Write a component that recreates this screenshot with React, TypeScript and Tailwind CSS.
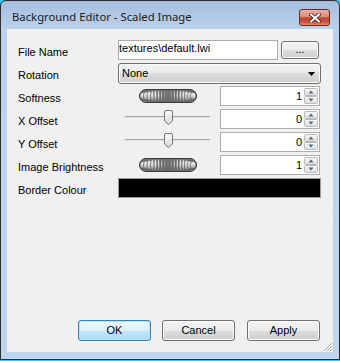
import React from "react"

function CloseButton() {
  return (
    <div className="ml-auto mr-[3px] mt-[8px] flex h-[17px] w-[31px] items-center justify-center rounded-[3px] border border-[#6e2a20] bg-[linear-gradient(to_bottom,#eab0a3_0%,#d98d7d_45%,#c3422e_52%,#c84f3b_78%,#e4896b_100%)]">
      <svg width="12" height="10" viewBox="0 0 12 10">
        <path d="M2 1.5 L10 8.5 M10 1.5 L2 8.5" stroke="#4a1c16" strokeWidth="3.6" strokeLinecap="square" />
        <path d="M2 1.5 L10 8.5 M10 1.5 L2 8.5" stroke="#ffffff" strokeWidth="2" strokeLinecap="square" />
      </svg>
    </div>
  )
}

function Wheel() {
  const ribs = Array.from({ length: 17 }, (_, i) => {
    const cx = 4 + i * 3.125
    const d = Math.abs(cx - 29) / 25
    const rx = 0.6 + 2.4 * Math.pow(d, 1.4)
    const ry = 6 * Math.sqrt(Math.max(0.35, 1 - Math.pow((cx - 29) / 30, 2)))
    return { cx, rx, ry }
  })
  return (
    <svg width="58" height="14" viewBox="0 0 58 14">
      <defs>
        <linearGradient id="rib" x1="0" y1="0" x2="0" y2="1">
          <stop offset="0" stopColor="#f8f8f8" />
          <stop offset="0.5" stopColor="#d8d8d8" />
          <stop offset="1" stopColor="#979797" />
        </linearGradient>
      </defs>
      <rect x="0.5" y="0.5" width="57" height="13" rx="6.5" fill="#747474" stroke="#3a3a3a" />
      {ribs.map((r, i) => (
        <ellipse key={i} cx={r.cx} cy="7" rx={r.rx} ry={r.ry} fill="url(#rib)" stroke="#444444" strokeWidth="0.6" />
      ))}
    </svg>
  )
}

function Track() {
  return (
    <svg width="99" height="20" viewBox="0 0 99 20">
      <defs>
        <linearGradient id="thumb" x1="0" y1="0" x2="0" y2="1">
          <stop offset="0" stopColor="#fbfbfb" />
          <stop offset="1" stopColor="#d6d6d6" />
        </linearGradient>
      </defs>
      <line x1="7" y1="7.5" x2="92" y2="7.5" stroke="#a2a2a2" />
      <line x1="7" y1="8.5" x2="92" y2="8.5" stroke="#e4e4e4" />
      <path d="M46.5 3 Q46.5 1.5 48 1.5 H53 Q54.5 1.5 54.5 3 V12 L50.5 15.5 L46.5 12 Z" fill="url(#thumb)" stroke="#777777" />
    </svg>
  )
}

function Spin() {
  return (
    <svg width="14" height="16" viewBox="0 0 14 16">
      <defs>
        <linearGradient id="spin" x1="0" y1="0" x2="0" y2="1">
          <stop offset="0" stopColor="#f7f7f7" />
          <stop offset="1" stopColor="#dedede" />
        </linearGradient>
      </defs>
      <rect x="0.5" y="0.5" width="13" height="7" rx="1" fill="url(#spin)" stroke="#b9b9b9" />
      <rect x="0.5" y="8.5" width="13" height="7" rx="1" fill="url(#spin)" stroke="#b9b9b9" />
      <path d="M4.5 5.5 L7 2.5 L9.5 5.5 Z" fill="#4f6690" />
      <path d="M4.5 10.5 L9.5 10.5 L7 13.5 Z" fill="#4f6690" />
    </svg>
  )
}

function Numeric({ value }: { value: string }) {
  return (
    <div className="ml-[3px] flex h-[20px] w-[100px] items-start justify-end border border-[#abadb3] bg-white">
      <span className="mt-[3px] leading-[13px]">{value}</span>
      <div className="ml-[2px] mr-[1px] mt-[1px]">
        <Spin />
      </div>
    </div>
  )
}

function WinButton({ children, primary }: { children: React.ReactNode; primary?: boolean }) {
  return (
    <div
      className={
        primary
          ? "flex h-[21px] w-[73px] items-center justify-center rounded-[3px] border border-[#3c7fb1] bg-[linear-gradient(to_bottom,#ecf7fd_0%,#dcf1fc_50%,#c2e7fc_50%,#acdbf5_100%)] shadow-[inset_0_0_0_1px_#b8e4fa] leading-[13px]"
          : "flex h-[21px] w-[73px] items-center justify-center rounded-[3px] border border-[#707070] bg-[linear-gradient(to_bottom,#f2f2f2_0%,#ebebeb_50%,#dddddd_50%,#cfcfcf_100%)] shadow-[inset_0_0_0_1px_#fbfbfb] leading-[13px]"
      }
    >
      {children}
    </div>
  )
}

function Row({ label, className, children }: { label: string; className: string; children: React.ReactNode }) {
  return (
    <div className={`flex ${className}`}>
      <div className="w-[100px] pt-[6px] leading-[13px]">{label}</div>
      <div className="flex flex-1">{children}</div>
    </div>
  )
}

export default function App() {
  return (
    <div className="h-[361px] w-[340px] bg-[#40c4e8] font-['Liberation_Sans',Arial,sans-serif] text-[11px] text-black">
      <div className="flex h-[360px] flex-col rounded-t-[6px] border border-[#2e2e2e] bg-[linear-gradient(to_bottom,#a5bfde_0px,#bcd2ec_30px,#bfd5ee_100%)] px-[6px] pb-[7px]">
        <div className="flex h-[28px] items-start">
          <span className="pl-[5px] pt-[8px] font-['Noto_Sans',sans-serif] text-[11.3px] leading-[16px] text-[#1b1b1b]">
            Background Editor - Scaled Image
          </span>
          <CloseButton />
        </div>

        <section className="relative flex flex-1 flex-col bg-[#f0f0f0] pb-[11px] pl-[11px] pr-[12px] pt-[11px]">
          <Row label="File Name" className="h-[20px]">
            <div className="h-[20px] w-[160px] border border-[#abadb3] bg-white pt-[1px] leading-[13px]">
              textures\default.lwi
            </div>
            <div className="ml-[3px] mt-[1px] flex h-[18px] w-[38px] items-end justify-center rounded-[3px] border border-[#707070] bg-[linear-gradient(to_bottom,#f2f2f2_0%,#ebebeb_50%,#dddddd_50%,#cfcfcf_100%)] pb-[2px] leading-[13px] shadow-[inset_0_0_0_1px_#fbfbfb]">
              ...
            </div>
          </Row>

          <Row label="Rotation" className="mt-[3px] h-[21px]">
            <div className="flex h-[21px] flex-1 items-start rounded-[3px] border border-[#707070] bg-[linear-gradient(to_bottom,#f2f2f2_0%,#ebebeb_50%,#dddddd_50%,#cfcfcf_100%)] pl-[3px] pt-[3px] leading-[13px] shadow-[inset_0_0_0_1px_#fbfbfb]">
              <span>None</span>
              <svg className="ml-auto mr-[5px] mt-[5px]" width="7" height="4" viewBox="0 0 7 4">
                <path d="M0 0 H7 L3.5 4 Z" fill="#000000" />
              </svg>
            </div>
          </Row>

          <Row label="Softness" className="mt-[2px] h-[20px]">
            <div className="flex w-[99px] items-center justify-center">
              <Wheel />
            </div>
            <Numeric value="1" />
          </Row>

          <Row label="X Offset" className="mt-[3px] h-[20px]">
            <div className="w-[99px]">
              <Track />
            </div>
            <Numeric value="0" />
          </Row>

          <Row label="Y Offset" className="mt-[3px] h-[20px]">
            <div className="w-[99px]">
              <Track />
            </div>
            <Numeric value="0" />
          </Row>

          <Row label="Image Brightness" className="mt-[3px] h-[20px]">
            <div className="flex w-[99px] items-center justify-center">
              <Wheel />
            </div>
            <Numeric value="1" />
          </Row>

          <Row label="Border Colour" className="mt-[3px] h-[20px]">
            <div className="h-[20px] flex-1 border border-[#9a9a9a] bg-black" />
          </Row>

          <div className="mt-auto flex justify-end pr-[1px]">
            <WinButton primary>OK</WinButton>
            <div className="ml-[11px]">
              <WinButton>Cancel</WinButton>
            </div>
            <div className="ml-[12px]">
              <WinButton>Apply</WinButton>
            </div>
          </div>

          <svg className="absolute bottom-0 right-0" width="11" height="11" viewBox="0 0 11 11">
            <path d="M10 2 L2 10 M10 5 L5 10 M10 8 L8 10" stroke="#a8a8a8" strokeWidth="1" />
            <path d="M11 3 L3 11 M11 6 L6 11 M11 9 L9 11" stroke="#ffffff" strokeWidth="1" />
          </svg>
        </section>
      </div>
    </div>
  )
}
